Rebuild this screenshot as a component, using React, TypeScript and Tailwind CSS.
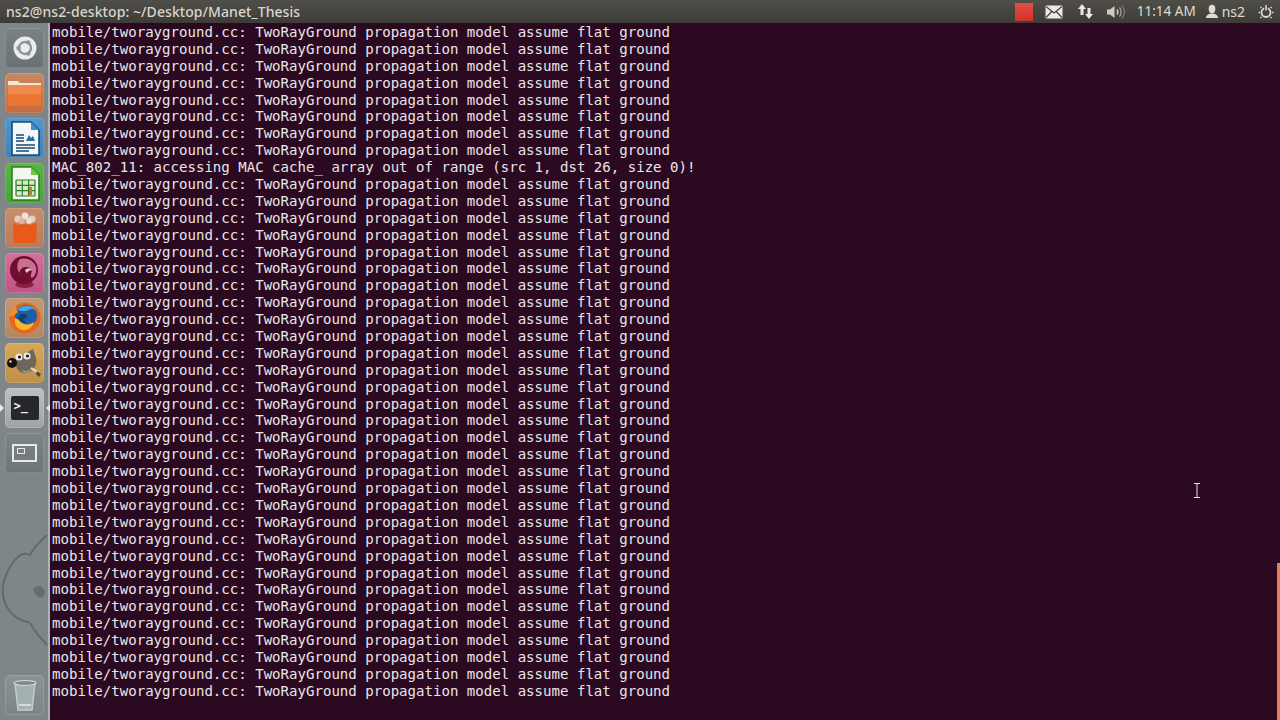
const line = "mobile/tworayground.cc: TwoRayGround propagation model assume flat ground";
const lines = Array.from({ length: 40 }, (_, i) =>
  i === 8 ? "MAC_802_11: accessing MAC cache_ array out of range (src 1, dst 26, size 0)!" : line
);

function Tile({ className, children }: { className: string; children: React.ReactNode }) {
  return (
    <div className={"w-[39px] h-[40px] rounded-[5px] flex items-center justify-center overflow-hidden shrink-0 shadow-[inset_0_0_0_1px_rgba(255,255,255,0.15)] " + className}>
      {children}
    </div>
  );
}

function UbuntuLogo() {
  return (
    <svg width="26" height="26" viewBox="0 0 26 26">
      <circle cx="13" cy="13" r="11.5" fill="#ececec" />
      <circle cx="13" cy="13" r="6" fill="none" stroke="#8f9495" strokeWidth="2.4" />
      <circle cx="6.5" cy="13" r="2.2" fill="#8f9495" />
      <circle cx="16.3" cy="7.4" r="2.2" fill="#8f9495" />
      <circle cx="16.3" cy="18.6" r="2.2" fill="#8f9495" />
    </svg>
  );
}

function FolderIcon() {
  return (
    <svg width="35" height="28" viewBox="0 0 35 28">
      <path d="M1 2h10l2 2h21v5H1z" fill="#f4e6da" />
      <path d="M1 6h33v20a1 1 0 0 1-1 1H2a1 1 0 0 1-1-1z" fill="#ef8a4c" />
      <path d="M1 15h33v11a1 1 0 0 1-1 1H2a1 1 0 0 1-1-1z" fill="#e9712f" opacity="0.8" />
    </svg>
  );
}

function WriterIcon() {
  return (
    <svg width="30" height="35" viewBox="0 0 30 35">
      <path d="M2 1h19l8 8v25H2z" fill="#f4f7f9" stroke="#174a78" strokeWidth="1.6" />
      <path d="M21 1v8h8z" fill="#3f8fcb" />
      <path d="M6 14h8M6 17h8M6 20h8M6 24h19M6 27h19M6 30h13" stroke="#17496f" strokeWidth="1.5" />
      <path d="M16 20l3-6 2 3 2-2 2 5z" fill="#2c6c9e" />
    </svg>
  );
}

function CalcIcon() {
  return (
    <svg width="30" height="35" viewBox="0 0 30 35">
      <path d="M2 1h19l8 8v25H2z" fill="#f3f8ef" stroke="#2f7d26" strokeWidth="1.6" />
      <path d="M21 1v8h8z" fill="#75c247" />
      <path d="M6 14h19v16H6z" fill="#d6ebc9" />
      <path d="M6 14h19M6 19.3h19M6 24.6h19M6 30h19M6 14v16M12.3 14v16M18.6 14v16M25 14v16" stroke="#2f7d26" strokeWidth="1.2" />
      <rect x="19" y="21" width="3" height="8" fill="#d1742c" />
    </svg>
  );
}

function BasketIcon() {
  return (
    <svg width="32" height="34" viewBox="0 0 32 34">
      <circle cx="9" cy="8" r="3.5" fill="#e6cdbc" />
      <circle cx="16" cy="5" r="3.5" fill="#efe3da" />
      <circle cx="23" cy="8" r="3.5" fill="#e6cdbc" />
      <circle cx="13" cy="10" r="3" fill="#dfb59a" />
      <circle cx="20" cy="10" r="3" fill="#ecdccf" />
      <path d="M4 12l5 2 6-1 6 1 7-2-1 20H5z" fill="#e8591a" />
    </svg>
  );
}

function CrystalIcon() {
  return (
    <svg width="33" height="36" viewBox="0 0 33 36">
      <path d="M7 30c3 4 16 4 19 0l-2-3H9z" fill="#8a1f43" />
      <circle cx="16" cy="15" r="14" fill="#6f0f2e" />
      <path d="M12 4c6-2 14 1 16 8 1 5-1 9-4 11-2-1-1-3-1-4 2-3 0-7-5-7-4 0-7 3-6 6-3-2-4-9 0-14z" fill="#c96f92" />
      <path d="M17 15c2-2 6-2 7 0-2 0-4 1-5 3-1-1-2-2-2-3z" fill="#f0c6d6" />
    </svg>
  );
}

function FirefoxIcon() {
  return (
    <svg width="34" height="34" viewBox="0 0 34 34">
      <circle cx="17" cy="17" r="15.5" fill="#e8661a" />
      <circle cx="18" cy="15" r="11" fill="#1d5ea8" />
      <path d="M9 9c4-5 14-6 19 0-4-2-7-1-9 1-3 0-7 0-10-1z" fill="#4aa3dc" />
      <path d="M11 19c3 5 10 6 15 2-1 5-6 9-12 8-5-1-8-6-7-12z" fill="#f7b52c" />
      <path d="M12 14c2-2 5-1 7 0 1 2-1 4-4 4l3 4c-4 0-8-3-8-6z" fill="#13406f" />
      <path d="M2 15c0-5 3-9 6-11 0 3 0 5 2 7-3 3-6 4-8 4z" fill="#f2902c" />
    </svg>
  );
}

function GimpIcon() {
  return (
    <svg width="37" height="34" viewBox="0 0 37 34">
      <path d="M8 14L27 3l3 9c1 6-1 13-9 15-6 1-10-3-11-7z" fill="#6c665b" />
      <path d="M16 24c3 2 8 1 10-3-1 5-8 8-10 3z" fill="#a89f8e" />
      <circle cx="6" cy="17" r="5" fill="#141210" />
      <circle cx="4.5" cy="15.5" r="1.2" fill="#dcdcdc" />
      <circle cx="13" cy="11" r="3.6" fill="#ece9e2" />
      <circle cx="21" cy="10" r="3.6" fill="#ece9e2" />
      <circle cx="13.5" cy="11" r="1.6" fill="#1c1915" />
      <circle cx="21.5" cy="10" r="1.6" fill="#1c1915" />
      <path d="M25 22l8 5" stroke="#d8d4ca" strokeWidth="2.4" />
      <path d="M31 25l4 3-2 3-3-3z" fill="#4a453c" />
    </svg>
  );
}

function MailIcon() {
  return (
    <svg width="18" height="14" viewBox="0 0 18 14">
      <rect x=".5" y=".5" width="17" height="13" rx="1" fill="#ece9e3" />
      <path d="M1 1.5l8 6.5 8-6.5M1 12.5l5.8-6M17 12.5l-5.8-6" fill="none" stroke="#47453f" strokeWidth="1.2" />
    </svg>
  );
}

function NetworkIcon() {
  return (
    <svg width="17" height="17" viewBox="0 0 17 17" fill="#ebe8e2">
      <path d="M5 1l4 5H6.5v6h-3V6H1z" />
      <path d="M12 16l4-5h-2.5V5h-3v6H8z" />
    </svg>
  );
}

function SoundIcon() {
  return (
    <svg width="20" height="16" viewBox="0 0 20 16" fill="none">
      <path d="M1 5.5h3L8.5 2v12L4 10.5H1z" fill="#cfcbc3" />
      <path d="M11 5.5c1 1.5 1 3.5 0 5" stroke="#cfcbc3" strokeWidth="1.5" />
      <path d="M13.5 3.5c2 2.5 2 6.5 0 9" stroke="#a9a59d" strokeWidth="1.3" />
      <path d="M16 1.5c3 4 3 9 0 13" stroke="#86837c" strokeWidth="1.2" />
    </svg>
  );
}

function UserIcon() {
  return (
    <svg width="14" height="15" viewBox="0 0 14 15" fill="#dfdbd2">
      <ellipse cx="7" cy="5" rx="3.3" ry="4.2" />
      <path d="M1 14c0-3 3-4 4.5-4.5h3C10 10 13 11 13 14z" />
    </svg>
  );
}

function PowerIcon() {
  return (
    <svg width="16" height="16" viewBox="0 0 16 16" fill="none">
      <circle cx="8" cy="8.5" r="4.5" stroke="#dfdbd2" strokeWidth="1.8" />
      <path d="M8 1v5" stroke="#3c3b37" strokeWidth="3.5" />
      <path d="M8 1v5.5" stroke="#dfdbd2" strokeWidth="1.6" />
      <path d="M2 8.5H.5M15.5 8.5H14M3.5 13l-1 1M12.5 13l1 1M3.5 4l-1-1M12.5 4l1-1" stroke="#dfdbd2" strokeWidth="1.6" />
    </svg>
  );
}

export default function App() {
  return (
    <div className="w-[1280px] h-[720px] flex flex-col overflow-hidden relative bg-[#2b0a21] font-['Liberation_Sans',sans-serif]">
      <div className="h-[23px] shrink-0 flex items-center px-[6px] bg-gradient-to-b from-[#504e49] to-[#3d3c37]">
        <span className="text-[14px] text-[#d9d5cc] font-['Noto_Sans',sans-serif] font-medium tracking-[0.08px]">
          ns2@ns2-desktop: ~/Desktop/Manet_Thesis
        </span>
        <div className="ml-auto flex items-center text-[#dfdbd2] text-[14px] font-['Noto_Sans',sans-serif]">
          <div className="w-[18px] h-[18px] bg-gradient-to-b from-[#e2504a] to-[#d22f2c] mr-[12px]" />
          <MailIcon />
          <span className="ml-[14px]"><NetworkIcon /></span>
          <span className="ml-[12px]"><SoundIcon /></span>
          <span className="ml-[11px] text-[13.5px]">11:14 AM</span>
          <span className="ml-[9px]"><UserIcon /></span>
          <span className="ml-[3px]">ns2</span>
          <span className="ml-[13px]"><PowerIcon /></span>
        </div>
      </div>

      <div className="flex-1 flex min-h-0">
        <div className="w-[50px] shrink-0 relative flex flex-col items-center pl-[1px] pt-[5px] pb-[5px] gap-[5px] bg-[#7f8689] border-r-[2px] border-[#aeb2b3]">
          <svg className="absolute left-0 top-[512px] w-[48px] h-[120px]" viewBox="0 0 48 120" fill="none">
            <path d="M47 0C38 8 32 16 30 20 20 14 8 30 3 50c-2 14 4 26 14 33 8 5 12 3 14 6 2 6 8 12 16 21" stroke="#636a6d" strokeWidth="2" />
            <path d="M33 55c3-5 8-5 10-2 3 3 2 8-1 9-4 1-6-1-9-7z" fill="#666d70" />
          </svg>
          <Tile className="bg-gradient-to-b from-[#7b8285] to-[#6a7174] relative"><UbuntuLogo /></Tile>
          <Tile className="bg-gradient-to-b from-[#c9875f] to-[#c66a3d] relative"><FolderIcon /></Tile>
          <Tile className="bg-gradient-to-b from-[#4f97cf] to-[#3b82be] relative"><WriterIcon /></Tile>
          <Tile className="bg-gradient-to-b from-[#58b744] to-[#46a536] relative"><CalcIcon /></Tile>
          <Tile className="bg-gradient-to-b from-[#c98d6c] to-[#bb7a58] relative"><BasketIcon /></Tile>
          <Tile className="bg-gradient-to-b from-[#d56f9b] to-[#bd5585] relative"><CrystalIcon /></Tile>
          <Tile className="bg-gradient-to-b from-[#c69872] to-[#b58660] relative"><FirefoxIcon /></Tile>
          <Tile className="bg-gradient-to-b from-[#d6a958] to-[#bd9048] relative"><GimpIcon /></Tile>
          <Tile className="bg-gradient-to-b from-[#bcc0bf] to-[#9ea3a3] relative">
            <div className="w-[28px] h-[24px] rounded-[2px] bg-[#26272a] text-[#f2f2f2] text-[12px] leading-none font-bold font-['DejaVu_Sans_Mono',monospace] pl-[3px] pt-[4px]">
              &gt;_
            </div>
          </Tile>
          <Tile className="bg-gradient-to-b from-[#7d8487] to-[#6e7578] relative">
            <div className="w-[25px] h-[18px] border-2 border-[#e8eaea] flex items-start pl-[3px] pt-[2px]">
              <div className="w-[8px] h-[6px] border border-[#e8eaea]" />
            </div>
          </Tile>
          <Tile className="mt-auto bg-gradient-to-b from-[#8c9395] to-[#7d8487] relative">
            <svg width="26" height="32" viewBox="0 0 26 32">
              <path d="M3 4h20l-3 27H6z" fill="#a5b0b3" stroke="#c3cbcc" strokeWidth="1.5" />
              <ellipse cx="13" cy="4" rx="11" ry="2.5" fill="#7d8a8e" stroke="#d5dadb" strokeWidth="1.2" />
              <path d="M7 26h12" stroke="#d5dadb" strokeWidth="2" />
            </svg>
          </Tile>
          <div className="absolute left-0 top-[381px] w-0 h-0 border-y-[4px] border-y-transparent border-l-[4px] border-l-[#e8e8e8]" />
          <div className="absolute right-[-2px] top-[381px] w-0 h-0 border-y-[4px] border-y-transparent border-r-[4px] border-r-[#e8e8e8]" />
        </div>

        <div className="flex-1 min-w-0 pt-[1px] pr-[3px]">
          {lines.map((text, i) => (
            <div key={i} className="h-[16.9px] leading-[16.9px] pl-[2px] whitespace-pre text-[14.07px] text-[#e9e5e8] font-['DejaVu_Sans_Mono',monospace]">
              {text}
            </div>
          ))}
        </div>
      </div>

      <div className="absolute right-0 top-[563px] w-[3px] h-[157px] bg-[#e0835a]" />

      <svg className="absolute left-[1193px] top-[483px]" width="8" height="15" viewBox="0 0 8 15" fill="none" stroke="#e6e2e6" strokeWidth="1">
        <path d="M1 .5h6M1 14.5h6M4 .5v14" />
      </svg>
    </div>
  );
}
